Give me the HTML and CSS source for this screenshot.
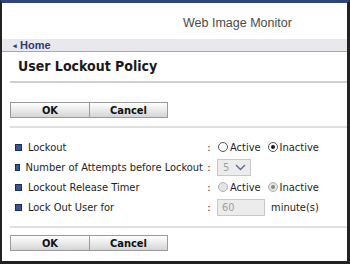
FILE: index.html
```html
<!DOCTYPE html>
<html>
<head>
    <title>User Lockout Policy</title>
    <link rel="stylesheet" href="styles.css">
</head>
<body>
    <div class="frame">
        <div class="header">Web Image Monitor</div>

        <div class="crumb"><span class="arrow">&#9666;</span> Home</div>

        <div class="content">
            <h1>User Lockout Policy</h1>

            <div class="button-row">
                <button>OK</button><button>Cancel</button>
            </div>

            <div class="settings">
                <div class="label"><span class="bullet"></span>Lockout</div>
                <div class="colon">:</div>
                <div class="value">
                    <span class="radio"></span>Active
                    <span class="radio checked"></span>Inactive
                </div>

                <div class="label"><span class="bullet"></span>Number of Attempts before Lockout</div>
                <div class="colon">:</div>
                <div class="value">
                    <span class="select">5 <svg width="11" height="7" viewBox="0 0 11 7"><path d="M1 1 L5.5 5.5 L10 1" fill="none" stroke="#5a6a9a" stroke-width="1.4"/></svg></span>
                </div>

                <div class="label"><span class="bullet"></span>Lockout Release Timer</div>
                <div class="colon">:</div>
                <div class="value">
                    <span class="radio disabled"></span>Active
                    <span class="radio disabled checked"></span>Inactive
                </div>

                <div class="label"><span class="bullet"></span>Lock Out User for</div>
                <div class="colon">:</div>
                <div class="value">
                    <span class="textbox">60</span>minute(s)
                </div>
            </div>

            <div class="button-row bottom">
                <button>OK</button><button>Cancel</button>
            </div>
        </div>
    </div>
</body>
</html>
```

FILE: styles.css
```css
body {
    margin: 0;
    padding: 0;
    background: #ffffff;
    font-family: "DejaVu Sans Condensed", "DejaVu Sans", sans-serif;
    font-size: 11px;
    color: #1e1e1e;
}

.frame {
    box-sizing: border-box;
    width: 350px;
    height: 264px;
    border: 2px solid #222222;
    border-top: 3px solid #2f4478;
    border-bottom: 3px solid #222222;
    border-right: 3px solid #222222;
    background: #ffffff;
    overflow: hidden;
}

.header {
    height: 36px;
    padding-left: 181px;
    padding-top: 13px;
    box-sizing: border-box;
    font-family: "Liberation Sans", Arial, sans-serif;
    font-size: 12.5px;
    color: #4a4a4a;
}

.crumb {
    height: 12px;
    line-height: 12px;
    background: #e8e8ed;
    border-bottom: 1px solid #a8a8a8;
    padding-left: 11px;
    font-family: "Liberation Sans", Arial, sans-serif;
    font-size: 11px;
    font-weight: bold;
    color: #2d3c7c;
}

.arrow {
    font-size: 7px;
    vertical-align: 1px;
}

.content {
    padding-left: 8px;
}

h1 {
    margin: 0;
    height: 29px;
    line-height: 29px;
    padding-left: 8px;
    border-bottom: 2px solid #d0d0d0;
    font-size: 14px;
    font-weight: bold;
    color: #1a1a1a;
}

.button-row {
    padding: 19px 0 8px 0;
    border-bottom: 2px solid #e0e0e0;
    display: flex;
}

.button-row.bottom {
    padding: 7px 0 0 0;
    border-bottom: none;
}

button {
    height: 16px;
    padding: 0;
    margin: 0;
    border: 1px solid #9a9a9a;
    background: linear-gradient(#ffffff, #e6e6e6 60%, #d4d4d4);
    font-family: "DejaVu Sans Condensed", "DejaVu Sans", sans-serif;
    font-size: 11px;
    font-weight: bold;
    color: #111111;
    width: 80px;
}

button + button {
    width: 78px;
    border-left: none;
}

.settings {
    display: grid;
    grid-template-columns: 193px 12px auto;
    grid-auto-rows: 20px;
    align-items: center;
    padding: 9px 0 9px 0;
    border-bottom: 2px solid #e0e0e0;
}

.label {
    display: flex;
    align-items: center;
    white-space: nowrap;
}

.bullet {
    width: 5px;
    height: 5px;
    margin-left: 5px;
    margin-right: 6px;
    background: #3a5590;
    border: 1px solid #1c2c58;
}

.colon {
    text-align: center;
}

.value {
    display: flex;
    align-items: center;
}

.radio {
    box-sizing: border-box;
    width: 10px;
    height: 10px;
    border: 1px solid #555555;
    border-radius: 50%;
    background: #ffffff;
    margin: 0 2px 0 3px;
    position: relative;
}

.value .radio:nth-of-type(2) {
    margin-left: 7px;
}

.radio.checked::after {
    content: "";
    position: absolute;
    left: 2px;
    top: 2px;
    width: 4px;
    height: 4px;
    border-radius: 50%;
    background: #1a1a1a;
}

.radio.disabled {
    border-color: #b0b0b0;
    background: #e4e4e4;
}

.radio.disabled.checked::after {
    background: #888888;
}

.select {
    box-sizing: border-box;
    display: flex;
    align-items: center;
    justify-content: space-between;
    width: 34px;
    height: 17px;
    margin-left: 2px;
    padding: 0 4px 0 5px;
    border: 1px solid #c8c8c8;
    background: #ececec;
    color: #a0a0a0;
}

.textbox {
    box-sizing: border-box;
    display: flex;
    align-items: center;
    width: 48px;
    height: 17px;
    margin: 0 6px 0 2px;
    padding-left: 4px;
    border: 1px solid #c8c8c8;
    background: #ececec;
    color: #a0a0a0;
}
```
